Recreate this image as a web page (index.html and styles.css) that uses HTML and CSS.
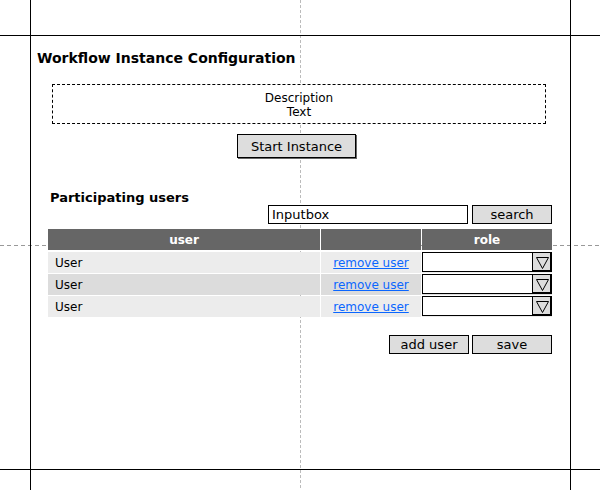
FILE: index.html
```html
<!DOCTYPE html>
<html lang="en">
<head>
<meta charset="utf-8">
<title>Workflow Instance Configuration</title>
<link rel="stylesheet" href="styles.css">
</head>
<body>
<div class="canvas">
  <div class="guide guide-v-dash"></div>
  <div class="guide guide-h-dash"></div>
  <div class="guide guide-v guide-left"></div>
  <div class="guide guide-v guide-right"></div>
  <div class="guide guide-h guide-top"></div>
  <div class="guide guide-h guide-bottom"></div>

  <main class="form">
    <h1 class="title">Workflow Instance Configuration</h1>
    <div class="desc">Description<br>Text</div>
    <div class="start-row">
      <button class="btn btn-start" type="button">Start Instance</button>
    </div>

    <section class="users">
      <h2 class="subtitle">Participating users</h2>
      <div class="search-row">
        <input class="inputbox" type="text" value="Inputbox">
        <button class="btn" type="button">search</button>
      </div>
      <table class="user-table">
        <colgroup>
          <col class="col-user">
          <col class="col-action">
          <col class="col-role">
        </colgroup>
        <thead>
          <tr><th>user</th><th></th><th>role</th></tr>
        </thead>
        <tbody>
          <tr class="row-light">
            <td class="name">User</td>
            <td class="action"><a href="#">remove user</a></td>
            <td class="role"><div class="select"><span class="select-value"></span><span class="select-arrow"><svg width="13" height="12" viewBox="0 0 13 12"><polygon points="0.5,0.5 12.5,0.5 6.5,11.5" fill="none" stroke="#000" stroke-width="1"/></svg></span></div></td>
          </tr>
          <tr class="row-dark">
            <td class="name">User</td>
            <td class="action"><a href="#">remove user</a></td>
            <td class="role"><div class="select"><span class="select-value"></span><span class="select-arrow"><svg width="13" height="12" viewBox="0 0 13 12"><polygon points="0.5,0.5 12.5,0.5 6.5,11.5" fill="none" stroke="#000" stroke-width="1"/></svg></span></div></td>
          </tr>
          <tr class="row-light">
            <td class="name">User</td>
            <td class="action"><a href="#">remove user</a></td>
            <td class="role"><div class="select"><span class="select-value"></span><span class="select-arrow"><svg width="13" height="12" viewBox="0 0 13 12"><polygon points="0.5,0.5 12.5,0.5 6.5,11.5" fill="none" stroke="#000" stroke-width="1"/></svg></span></div></td>
          </tr>
        </tbody>
      </table>
      <div class="footer-actions">
        <button class="btn" type="button">add user</button>
        <button class="btn" type="button">save</button>
      </div>
    </section>
  </main>
</div>
</body>
</html>
```

FILE: styles.css
```css
* { box-sizing: border-box; }

html, body {
  margin: 0;
  padding: 0;
  background: #fff;
}

body {
  font-family: "DejaVu Sans", Verdana, sans-serif;
  color: #000;
}

.canvas {
  position: relative;
  width: 600px;
  height: 490px;
  overflow: hidden;
}

/* design guides */
.guide {
  position: absolute;
  z-index: 0;
}
.guide-v { top: 0; bottom: 0; width: 1px; background: #000; z-index: 2; }
.guide-h { left: 0; right: 0; height: 1px; background: #000; z-index: 2; }
.guide-left { left: 30px; }
.guide-right { left: 570px; }
.guide-top { top: 35px; }
.guide-bottom { top: 469px; }

.guide-v-dash {
  left: 300px;
  top: 0;
  bottom: 0;
  width: 1px;
  background: repeating-linear-gradient(to bottom, #bbb 0 3px, transparent 3px 5px);
}
.guide-h-dash {
  top: 245px;
  left: 0;
  right: 0;
  height: 1px;
  background: repeating-linear-gradient(to right, #999 0 4px, transparent 4px 7px);
}

/* content */
.form {
  position: relative;
  z-index: 1;
  padding-top: 50px;
}

.title {
  margin: 0 0 0 37px;
  font-size: 14px;
  line-height: 17px;
  font-weight: bold;
}

.desc {
  margin: 17px 0 0 52px;
  width: 494px;
  height: 40px;
  padding-top: 6px;
  border: 1px dashed #000;
  background: #fff;
  font-size: 12px;
  line-height: 14px;
  text-align: center;
}

.start-row {
  margin: 10px 0 0 237px;
  display: flex;
}

.btn {
  width: 80px;
  height: 19px;
  padding: 0;
  border: 1px solid #000;
  background: #ddd;
  color: #000;
  font-family: "DejaVu Sans", Verdana, sans-serif;
  font-size: 13px;
  line-height: 17px;
}

.btn-start {
  width: 119px;
  height: 24px;
  box-shadow: 1px 1px 0 #666;
}

.subtitle {
  margin: 32px 0 0 50px;
  font-size: 13px;
  line-height: 15px;
  font-weight: bold;
}

.search-row {
  display: flex;
  justify-content: flex-end;
  gap: 4px;
  width: 504px;
  margin-left: 48px;
}

.inputbox {
  width: 200px;
  height: 19px;
  margin: 0;
  padding: 0 0 0 3px;
  border: 1px solid #000;
  background: #fff;
  color: #000;
  font-family: "DejaVu Sans", Verdana, sans-serif;
  font-size: 13px;
  outline: none;
}

.user-table {
  margin: 4px 0 0 47px;
  width: 506px;
  table-layout: fixed;
  border-collapse: separate;
  border-spacing: 1px;
  font-size: 12px;
}
.col-user { width: 272px; }
.col-action { width: 100px; }
.col-role { width: 130px; }

.user-table th {
  padding: 2px 0 0;
  height: 22px;
  line-height: 19px;
  background: #666;
  color: #fff;
  font-weight: bold;
  text-align: center;
  border-bottom: 1px solid #fff;
}

.user-table td {
  padding: 2px 0 0;
  height: 21px;
  line-height: 19px;
  vertical-align: top;
}

.row-light td { background: #ececec; }
.row-dark td { background: #dcdcdc; }

.user-table td.name { padding-left: 7px; }
.user-table td.action { text-align: center; }
.user-table td.action a { color: #0a66ff; text-decoration: underline; }
.user-table td.role { padding: 0; }

.select {
  display: flex;
  width: 130px;
  height: 20px;
  border: 1px solid #000;
  background: #fff;
}
.select-value { flex: 1; }
.select-arrow {
  display: flex;
  align-items: flex-start;
  width: 19px;
  height: 18px;
  padding: 4px 0 0 3px;
  border-left: 1px solid #000;
  background: #ddd;
  box-shadow: inset -1px -1px 0 #000;
}
.select-arrow svg { display: block; }

.footer-actions {
  display: flex;
  justify-content: flex-end;
  gap: 3px;
  width: 504px;
  margin: 17px 0 0 48px;
}
```
